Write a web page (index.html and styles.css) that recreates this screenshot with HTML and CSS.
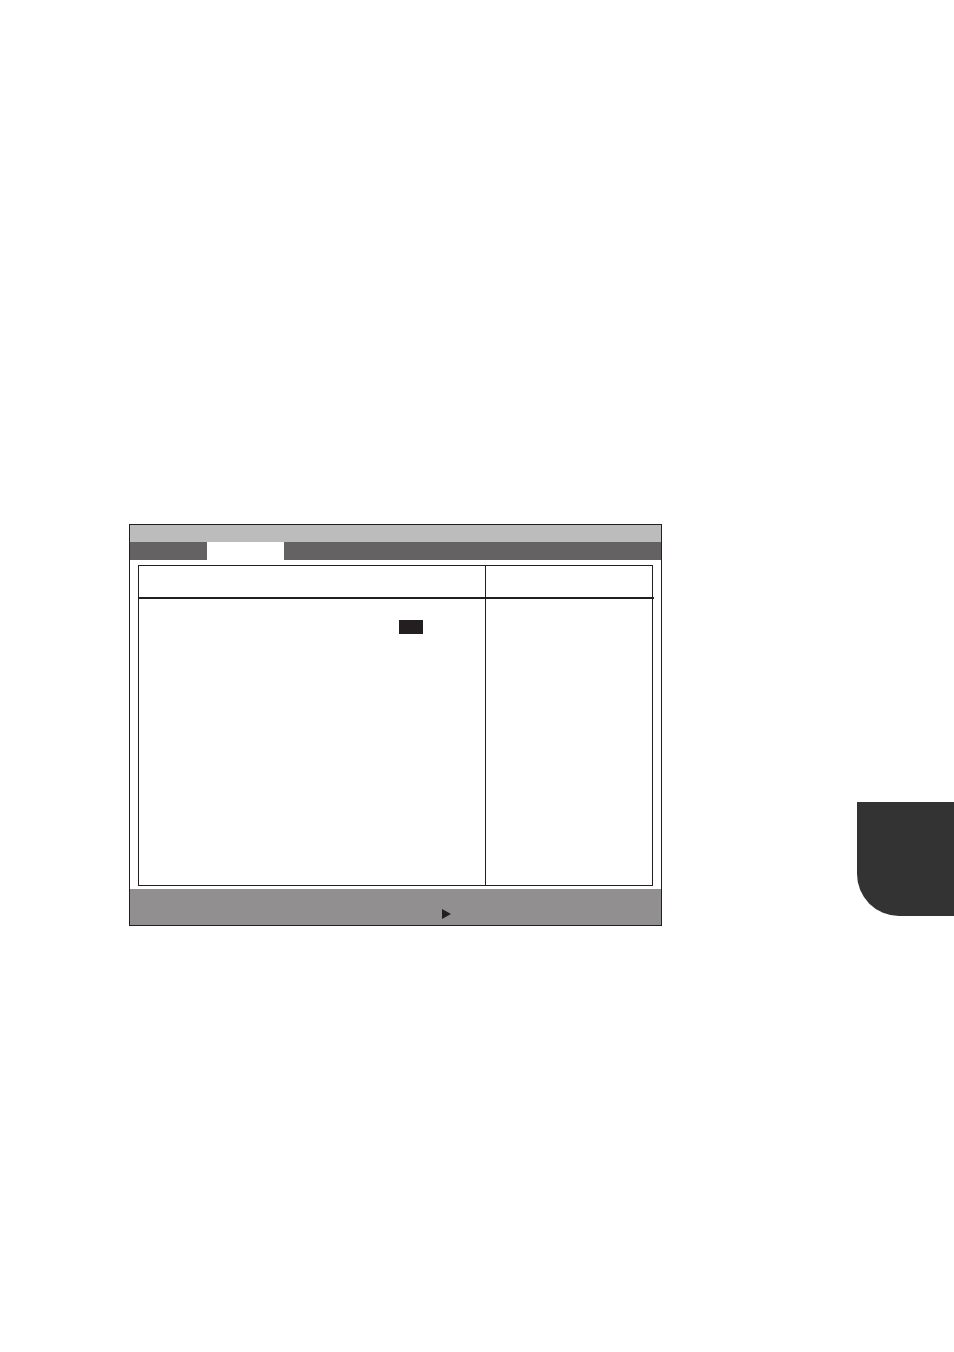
FILE: index.html
```html
<!DOCTYPE html>
<html>
<head>
<meta charset="utf-8">
<link rel="stylesheet" href="styles.css">
</head>
<body>
<div class="page">
  <div class="frame">
    <div class="titlebar"></div>
    <div class="menubar"><div class="menu-tab"></div></div>
    <div class="content">
      <div class="panel">
        <div class="panel-row panel-head">
          <div class="col-main"></div>
          <div class="col-help"></div>
        </div>
        <div class="rule"></div>
        <div class="panel-row panel-body">
          <div class="col-main"><div class="value-box"></div></div>
          <div class="col-help"></div>
        </div>
      </div>
    </div>
    <div class="footer"><div class="arrow"></div></div>
  </div>
  <div class="thumb-tab"></div>
</div>
</body>
</html>
```
FILE: styles.css
```css
html, body {
  margin: 0;
  padding: 0;
  background: #ffffff;
  font-family: "Liberation Sans", Arial, sans-serif;
}
.page {
  display: flex;
  align-items: flex-start;
  width: 954px;
  min-height: 1352px;
  box-sizing: border-box;
  padding: 524px 0 0 129px;
  overflow: hidden;
}
.frame {
  width: 531px;
  border: 1px solid #231f20;
  flex: none;
}
.titlebar {
  height: 17px;
  background: #bcbcbc;
}
.menubar {
  height: 18px;
  background: #656263;
  display: flex;
}
.menu-tab {
  margin-left: 77px;
  width: 77px;
  background: #ffffff;
}
.content {
  padding: 5px 8px 3px;
}
.panel {
  border: 1px solid #231f20;
}
.panel-row {
  display: flex;
}
.panel-head {
  height: 31px;
}
.panel-body {
  height: 286px;
}
.col-main {
  width: 346px;
  border-right: 1px solid #231f20;
  box-sizing: content-box;
}
.col-help {
  width: 166px;
}
.rule {
  height: 2px;
  background: #231f20;
  margin-right: -2px;
}
.panel-body .col-main {
  padding-top: 21px;
  height: 265px;
}
.value-box {
  margin-left: 260px;
  width: 24px;
  height: 14px;
  background: #231f20;
}
.footer {
  height: 36px;
  background: #918f90;
  padding: 20px 0 0 312px;
  box-sizing: border-box;
}
.arrow {
  width: 0;
  height: 0;
  border-left: 9px solid #231f20;
  border-top: 5px solid transparent;
  border-bottom: 5px solid transparent;
}
.thumb-tab {
  flex: none;
  margin-left: 195px;
  margin-top: 278px;
  width: 97px;
  height: 114px;
  background: #333333;
  border-bottom-left-radius: 42px;
}
```
